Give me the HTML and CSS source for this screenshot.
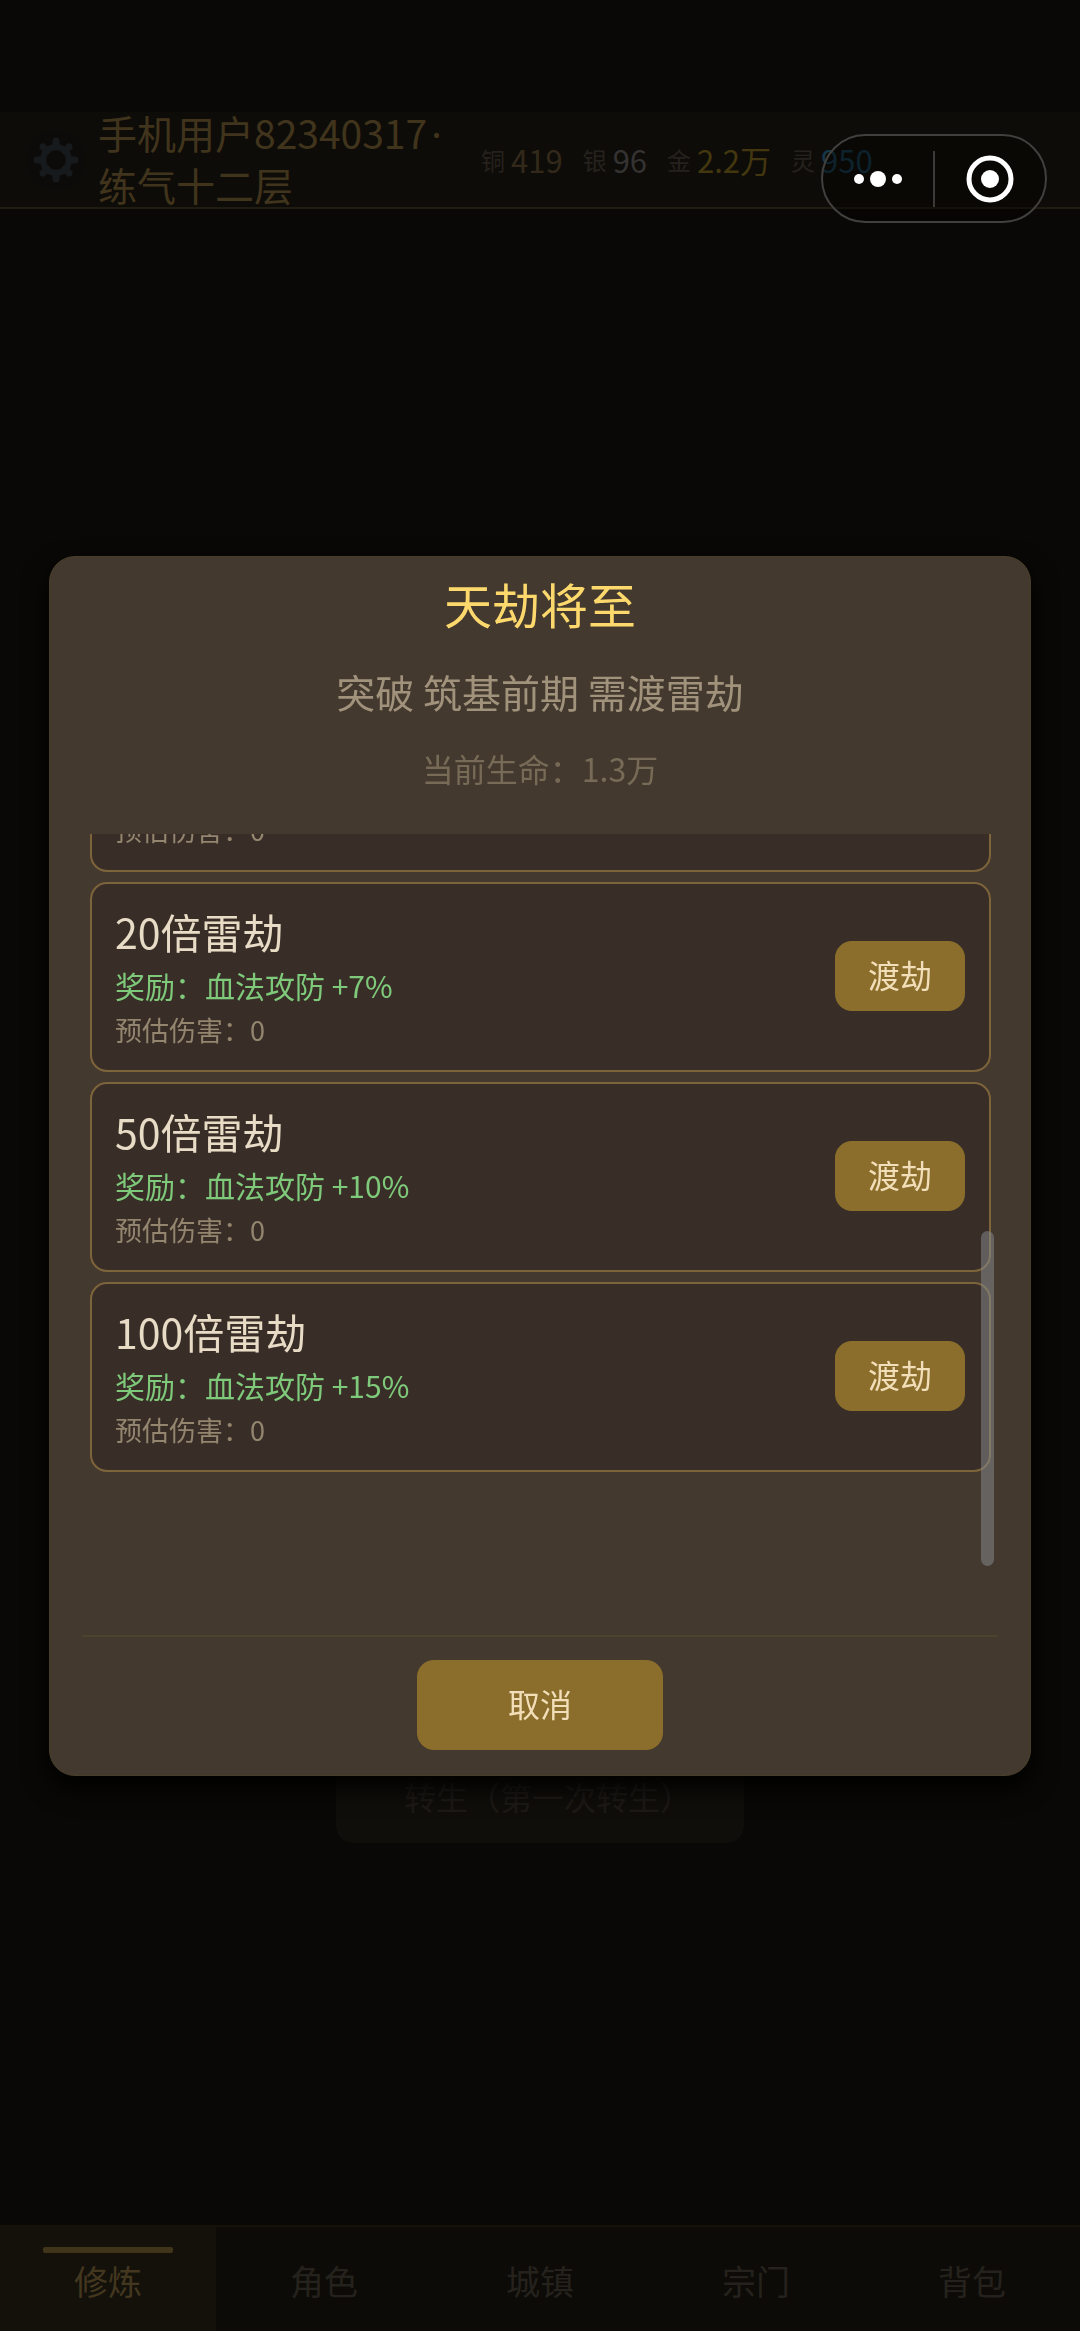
FILE: index.html
```html
<!DOCTYPE html>
<html lang="zh-CN">
<head>
<meta charset="utf-8">
<meta name="viewport" content="width=device-width, initial-scale=1">
<title>天劫将至</title>
<link rel="stylesheet" href="styles.css">
</head>
<body>
<div class="page">
  <header class="topbar">
    <button class="settings" type="button">
      <svg viewBox="0 0 60 60" width="60" height="60" aria-hidden="true">
        <g stroke="#171a1c" stroke-width="7" stroke-linecap="round">
          <path d="M30 11V17M30 43V49M11 30H17M43 30H49M17 17L21 21M39 39L43 43M43 17L39 21M21 39L17 43"/>
        </g>
        <circle cx="30" cy="30" r="13" fill="none" stroke="#171a1c" stroke-width="6"/>
      </svg>
    </button>
    <div class="player">手机用户82340317<span class="dot">·</span> 练气十二层</div>
    <dl class="wallet">
      <div class="coin copper"><dt>铜</dt><dd>419</dd></div>
      <div class="coin silver"><dt>银</dt><dd>96</dd></div>
      <div class="coin gold"><dt>金</dt><dd>2.2万</dd></div>
      <div class="coin spirit"><dt>灵</dt><dd>950</dd></div>
    </dl>
  </header>
  <main class="stage">
    <button class="rebirth" type="button">转生（第一次转生）</button>
  </main>
  <nav class="tabs">
    <a class="tab active" href="#practice">修炼</a>
    <a class="tab" href="#role">角色</a>
    <a class="tab" href="#town">城镇</a>
    <a class="tab" href="#sect">宗门</a>
    <a class="tab" href="#bag">背包</a>
  </nav>
</div>

<div class="overlay">
  <section class="modal" role="dialog" aria-labelledby="modal-title">
    <div class="modal-head">
      <h1 class="modal-title" id="modal-title">天劫将至</h1>
      <p class="modal-sub">突破 筑基前期 需渡雷劫</p>
      <p class="modal-life">当前生命：1.3万</p>
    </div>
    <div class="scroller">
      <ul class="list">
        <li class="card">
          <div class="info"><p class="damage">预估伤害：0</p></div>
        </li>
        <li class="card">
          <div class="info">
            <h2 class="name">20倍雷劫</h2>
            <p class="reward">奖励：血法攻防 +7%</p>
            <p class="damage">预估伤害：0</p>
          </div>
          <button class="go" type="button">渡劫</button>
        </li>
        <li class="card">
          <div class="info">
            <h2 class="name">50倍雷劫</h2>
            <p class="reward">奖励：血法攻防 +10%</p>
            <p class="damage">预估伤害：0</p>
          </div>
          <button class="go" type="button">渡劫</button>
        </li>
        <li class="card">
          <div class="info">
            <h2 class="name">100倍雷劫</h2>
            <p class="reward">奖励：血法攻防 +15%</p>
            <p class="damage">预估伤害：0</p>
          </div>
          <button class="go" type="button">渡劫</button>
        </li>
      </ul>
      <div class="thumb"></div>
    </div>
    <div class="modal-foot">
      <button class="cancel" type="button">取消</button>
    </div>
  </section>
</div>

<div class="capsule">
  <button class="capsule-btn" type="button">
    <svg viewBox="0 0 50 20" width="50" height="20" aria-hidden="true">
      <g fill="#fff"><circle cx="6" cy="10" r="5"/><circle cx="25" cy="10" r="8"/><circle cx="44" cy="10" r="5"/></g>
    </svg>
  </button>
  <span class="capsule-line"></span>
  <button class="capsule-btn" type="button">
    <svg viewBox="0 0 48 48" width="48" height="48" aria-hidden="true">
      <circle cx="24" cy="24" r="21" fill="none" stroke="#fff" stroke-width="5"/>
      <circle cx="24" cy="24" r="9" fill="#fff"/>
    </svg>
  </button>
</div>
</body>
</html>
```
FILE: styles.css
```css
* {
  box-sizing: border-box;
}

body,
h1,
h2,
p,
ul,
dl,
dd {
  margin: 0;
  padding: 0;
}

body {
  background: #090806;
  font-family: "Noto Sans CJK SC", "Noto Sans", sans-serif;
  font-weight: 400;
}

button {
  border: 0;
  padding: 0;
  background: none;
  font: inherit;
  color: inherit;
}

h1,
h2 {
  font-weight: 400;
}

svg {
  display: block;
}

/* page behind the dialog */
.page {
  display: flex;
  flex-direction: column;
  min-height: 100vh;
  padding-top: 112px;
}

.topbar {
  display: flex;
  align-items: center;
  height: 97px;
  padding-left: 26px;
  background: #0e0c08;
  border-bottom: 2px solid #211c11;
}

.settings {
  flex: none;
  border-radius: 50%;
  background: #0c0b09;
}

.player {
  flex: none;
  width: 360px;
  margin-left: 12px;
  padding-bottom: 2px;
  font-size: 39px;
  line-height: 51px;
  color: #41341c;
}

.dot {
  padding-left: 4px;
  font-family: "Noto Sans", sans-serif;
}

.wallet {
  display: flex;
  gap: 20px;
  margin-left: 23px;
}

.coin {
  display: flex;
  align-items: center;
  gap: 6px;
  line-height: 40px;
  white-space: nowrap;
}

.coin dt {
  font-size: 24px;
  color: #25221e;
}

.coin dd {
  font-size: 31px;
}

.copper dd { color: #33291a; }
.silver dd { color: #343332; }
.gold dd { color: #43370f; }
.spirit dd { color: #14384a; }

.stage {
  flex: 1;
  display: flex;
  flex-direction: column;
  align-items: center;
  justify-content: flex-end;
  padding-bottom: 382px;
}

.rebirth {
  width: 408px;
  height: 90px;
  padding: 0 0 4px 16px;
  border-radius: 17px;
  background: #100e0a;
  font-size: 32px;
  color: #1d1a16;
}

.tabs {
  display: flex;
  height: 106px;
  background: #0d0b07;
  border-top: 2px solid #15120a;
}

.tab {
  flex: 1;
  display: flex;
  flex-direction: column;
  align-items: center;
  padding-top: 28px;
  font-size: 34px;
  line-height: 52px;
  color: #25221d;
  text-decoration: none;
}

.tab.active {
  padding-top: 20px;
  background: #14110b;
  color: #43371f;
}

.tab.active::before {
  content: "";
  width: 130px;
  height: 6px;
  margin-bottom: 2px;
  border-radius: 2px;
  background: #40351b;
}

/* dialog */
.overlay {
  position: fixed;
  inset: 0;
  display: flex;
  align-items: center;
  justify-content: center;
  padding: 0 49px;
}

.modal {
  display: flex;
  flex-direction: column;
  width: 100%;
  height: 1220px;
  max-height: 94vh;
  border: 1px solid #4a3e2a;
  border-radius: 26px;
  background: #43392e;
  box-shadow: 0 12px 26px #000;
}

.modal-head {
  display: flex;
  flex-direction: column;
  align-items: center;
  padding: 10px 40px 43px;
}

.modal-title {
  font-size: 48px;
  line-height: 72px;
  color: #fdd96d;
}

.modal-sub {
  margin-top: 22px;
  font-size: 39px;
  line-height: 60px;
  color: #a1927c;
}

.modal-life {
  margin-top: 24px;
  font-size: 32px;
  line-height: 46px;
  color: #776a56;
}

.scroller {
  position: relative;
  flex: 1;
  min-height: 0;
  display: flex;
  margin: 0 39px 66px 40px;
}

.list {
  flex: 1;
  display: flex;
  flex-direction: column;
  justify-content: flex-end;
  gap: 10px;
  padding-bottom: 97px;
  overflow: hidden;
  list-style: none;
}

.card {
  flex: none;
  display: flex;
  align-items: center;
  justify-content: space-between;
  padding: 18px 24px 20px 23px;
  border: 2px solid #7d643b;
  border-radius: 17px;
  background: #382e27;
}

.name {
  font-size: 41px;
  line-height: 58px;
  color: #e9dcc6;
}

.reward {
  font-size: 30px;
  line-height: 50px;
  color: #7fc97b;
}

.damage {
  font-size: 27px;
  line-height: 40px;
  color: #94856f;
}

.go {
  width: 130px;
  height: 70px;
  padding-bottom: 4px;
  border-radius: 17px;
  background: #8b6e2c;
  font-size: 32px;
  color: #f2dfb9;
}

.thumb {
  position: absolute;
  right: -3px;
  bottom: 3px;
  width: 13px;
  height: 335px;
  border-radius: 7px;
  background: rgba(136, 140, 146, 0.5);
}

.modal-foot {
  display: flex;
  justify-content: center;
  margin: 0 32px;
  padding: 23px 0 25px;
  border-top: 2px solid #4c422e;
}

.cancel {
  width: 246px;
  height: 90px;
  padding-bottom: 4px;
  border-radius: 17px;
  background: #8b6e2c;
  font-size: 32px;
  color: #f2dfb9;
}

/* host app controls floating over the page */
.capsule {
  position: fixed;
  top: 134px;
  right: 33px;
  display: flex;
  align-items: center;
  width: 226px;
  height: 89px;
  border: 2px solid #41403e;
  border-radius: 45px;
  background: rgba(3, 3, 2, 0.4);
}

.capsule-btn {
  flex: 1;
  display: flex;
  align-items: center;
  justify-content: center;
}

.capsule-line {
  width: 2px;
  height: 56px;
  background: #3b3a38;
}
```
